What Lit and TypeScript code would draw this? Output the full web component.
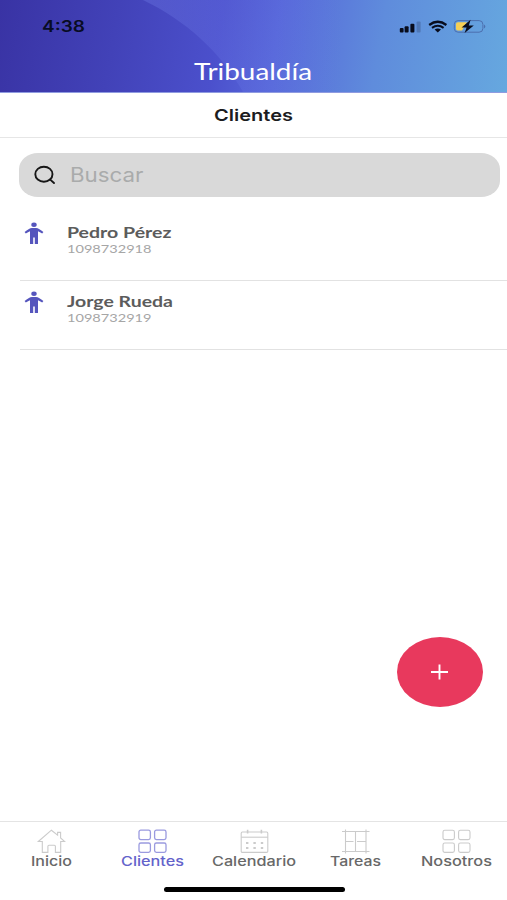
import { LitElement, html, css, svg } from "lit";
import { customElement, property } from "lit/decorators.js";

/** One line of text set to an exact width, with widened letterforms. */
@customElement("wide-text")
class WideText extends LitElement {
  @property() text = "";
  @property({ type: Number }) width = 50;
  @property({ type: Number }) size = 16;

  static styles = css`
    :host { display: block; flex: none; line-height: 0; }
    svg { display: block; overflow: visible; }
    text { fill: currentColor; }
  `;

  render() {
    const h = Math.round(this.size * 1.2);
    return html`<svg width=${this.width} height=${h}>
      <text x="0" y=${Math.round(this.size * 0.95)} font-size=${this.size}
        textLength=${this.width} lengthAdjust="spacingAndGlyphs">${this.text}</text>
    </svg>`;
  }
}

const grid = svg`
  <rect x="1" y="1.2" width="11.4" height="9.4" rx="1.8"/>
  <rect x="16.6" y="1.2" width="11.4" height="9.4" rx="1.8"/>
  <rect x="1" y="14" width="11.4" height="9.4" rx="1.8"/>
  <rect x="16.6" y="14" width="11.4" height="9.4" rx="1.8"/>`;

const icons = {
  home: svg`<path d="M1.3 12.5 L14.4 1.2 L20.6 6.2 V3.4 H23.6 V9 L27.7 12.5 H23.7 V23.4 H18.4 V17.3 Q18.4 16.2 17.3 16.2 H12 Q10.9 16.2 10.9 17.3 V23.4 H5.3 V12.5 Z"/>`,
  grid,
  calendar: svg`<rect x="1.2" y="3" width="26.6" height="20.4" rx="1.2"/><path d="M1.2 8.2 H27.8"/>
    <path stroke-width="1.6" d="M7.6 .8 V4.4 M21.4 .8 V4.4"/>
    <path stroke-width="1.8" d="M6 14 H8.4 M13.4 14 H15.8 M20.8 14 H23.2 M6 19 H8.4 M13.4 19 H15.8 M20.8 19 H23.2"/>`,
  frame: svg`<path d="M4.5 .5 V24.5 M25 .5 V24.5 M1 2.5 H28.5 M1 22.5 H28.5 M14.5 2.5 V22.5 M4.5 12.5 H12.5 M16 12.5 H25"/>`,
};

const tabs = [
  { label: "Inicio", width: 41, icon: icons.home },
  { label: "Clientes", width: 63, icon: icons.grid, active: true },
  { label: "Calendario", width: 84, icon: icons.calendar },
  { label: "Tareas", width: 51, icon: icons.frame },
  { label: "Nosotros", width: 71, icon: icons.grid },
];

const clients = [
  { name: "Pedro Pérez", width: 104.5, id: "1098732918" },
  { name: "Jorge Rueda", width: 106, id: "1098732919" },
];

@customElement("app-root")
class AppRoot extends LitElement {
  static styles = css`
    :host {
      display: flex; flex-direction: column; position: relative;
      width: 507px; height: 900px; overflow: hidden; background: #fff;
      font-family: Inter, "Liberation Sans", sans-serif;
    }
    svg { display: block; flex: none; }
    .header {
      height: 93px; flex: none; position: relative; box-sizing: border-box;
      border-bottom: 1px solid #8f9be0;
      background: linear-gradient(100deg, #3933a4 0%, #4242b8 23%, #4b50cc 43%, #5666d9 54%, #5f8cdc 74%, #66a8df 100%);
    }
    .curve { position: absolute; left: 0; top: 0; }
    .status { position: relative; display: flex; align-items: center; height: 52px; padding: 0 21px 0 42px; justify-content: space-between; }
    .time { font-weight: 600; color: #080c24; }
    .title { position: relative; display: flex; justify-content: center; color: #fff; font-family: Lato, sans-serif; padding: 7px .5px 0 0; }
    .sub {
      height: 45px; flex: none; box-sizing: border-box; border-bottom: 1px solid #e6e6e6;
      display: flex; justify-content: center; padding-top: 12px; color: #1c1c1e; font-weight: 600;
    }
    .search {
      margin: 15px 7px 0 19px; height: 43.5px; flex: none; border-radius: 19px / 16px; background: #d9d9d9;
      display: flex; align-items: center; gap: 14px; padding-left: 15px; color: #a9abab;
    }
    .list { margin: 14.5px 0 0 20px; font-family: Lato, sans-serif; }
    .row { height: 69px; box-sizing: border-box; border-bottom: 1px solid #e2e2e2; display: flex; padding: 10px 0 0 4px; gap: 23px; }
    .row:first-child { height: 70px; padding-top: 11px; }
    .row svg { margin-top: -1px; }
    .name { color: #5c5c5c; font-weight: 700; margin-top: 1px; }
    .id { color: #a6a6a6; margin-top: -1px; }
    .fab {
      position: absolute; left: 397px; top: 637px; width: 86px; height: 70px; border-radius: 50%;
      background: #e8395d; display: flex; align-items: center; justify-content: center;
    }
    .tabs {
      margin-top: auto; height: 79px; flex: none; box-sizing: border-box; border-top: 1px solid #e4e4e4;
      display: grid; grid-template-columns: 101px 102px 101px 102px 100px; padding: 7px 0 0 .5px; position: relative;
    }
    .tab { display: flex; flex-direction: column; align-items: center; color: #686868; font-weight: 500; }
    .tab svg { fill: none; stroke: #cbcbcb; stroke-width: 1.1; }
    .tab wide-text { margin-top: -1px; }
    .tab.active { color: #6463cb; }
    .tab.active svg { stroke: #9a9adf; stroke-width: 1.3; }
    .home-bar { position: absolute; left: 163.5px; top: 65px; width: 181px; height: 5px; border-radius: 3px; background: #000; }
  `;

  render() {
    return html`
      <div class="header">
        <svg class="curve" width="507" height="92">
          <defs><linearGradient id="sheen"><stop stop-color="#8a9cff" stop-opacity=".22"/><stop offset=".55" stop-color="#8a9cff" stop-opacity="0"/></linearGradient></defs>
          <path d="M143 0 C185 20 221 52 243 92 H507 V0 Z" fill="url(#sheen)"/>
        </svg>
        <div class="status">
          <wide-text class="time" text="4:38" .width=${43} .size=${15.5}></wide-text>
          <svg width="88" height="16" viewBox="0 .6 88 16">
            <g fill="#080c1c">
              <rect x="1.8" y="10.6" width="3.8" height="4.4" rx="1"/><rect x="6.6" y="8.9" width="4" height="6.1" rx="1"/>
              <rect x="12.4" y="6.3" width="4" height="8.7" rx="1"/>
              <rect x="18.6" y="4" width="4" height="11" rx="1" opacity=".2"/>
              <path d="M39.8 15 L36.6 12.2 Q39.8 9.8 43 12.2 Z"/>
            </g>
            <path d="M31.2 7.6 Q39.8 1.2 48.4 7.6" fill="none" stroke="#080c1c" stroke-width="2.3"/>
            <path d="M34 10.5 Q39.8 6.3 45.6 10.5" fill="none" stroke="#080c1c" stroke-width="2.1"/>
            <rect x="56.3" y="3.2" width="28.6" height="11.6" rx="3.8" fill="none" stroke="#4c6fae" stroke-width="1"/>
            <path d="M86 7 Q88.6 9 86 11 Z" fill="#4c6fae"/>
            <path d="M59.8 4.8 H69 L64 13.2 H59.8 Q58 13.2 58 11.4 V6.6 Q58 4.8 59.8 4.8 Z" fill="#f6cf55"/>
            <path d="M72.6 2.3 L63.6 10 H68.6 L66.6 15.6 L75.8 8 H70.8 Z" fill="#080c1c"/>
          </svg>
        </div>
        <div class="title"><wide-text text="Tribualdía" .width=${118} .size=${22.5}></wide-text></div>
      </div>
      <div class="sub"><wide-text text="Clientes" .width=${79} .size=${16.5}></wide-text></div>
      <div class="search">
        <svg width="22" height="20" fill="none" stroke="#171717" stroke-width="1.9" stroke-linecap="round">
          <ellipse cx="9.9" cy="9.2" rx="8.6" ry="7.5"/><path d="M16.2 14.6 L20 18"/>
        </svg>
        <wide-text text="Buscar" .width=${73.5} .size=${19.5}></wide-text>
      </div>
      <div class="list">
        ${clients.map((c) => html`
          <div class="row">
            <svg width="20" height="24" fill="#5555bd">
              <ellipse cx="10" cy="3.8" rx="2.7" ry="2.2"/>
              <path d="M.6 11.1 Q4.8 7.1 8 6.9 H12 Q15.2 7.1 19.4 11.1 L18.2 12.6 Q15.8 11 14 10.3 V23 H10.8 V16.6 H9.2 V23 H6 V10.3 Q4.2 11 1.8 12.6 Z"/>
            </svg>
            <div>
              <wide-text class="name" .text=${c.name} .width=${c.width} .size=${16}></wide-text>
              <wide-text class="id" .text=${c.id} .width=${84.5} .size=${12.3}></wide-text>
            </div>
          </div>`)}
      </div>
      <div class="fab">
        <svg width="18" height="16" stroke="#fff" stroke-width="1.9"><path d="M0 8 H17 M8.5 .5 V15.5"/></svg>
      </div>
      <div class="tabs">
        ${tabs.map((t) => html`
          <div class="tab ${t.active ? "active" : ""}">
            <svg width="29" height="25">${t.icon}</svg>
            <wide-text .text=${t.label} .width=${t.width} .size=${13.2}></wide-text>
          </div>`)}
        <div class="home-bar"></div>
      </div>
    `;
  }
}
